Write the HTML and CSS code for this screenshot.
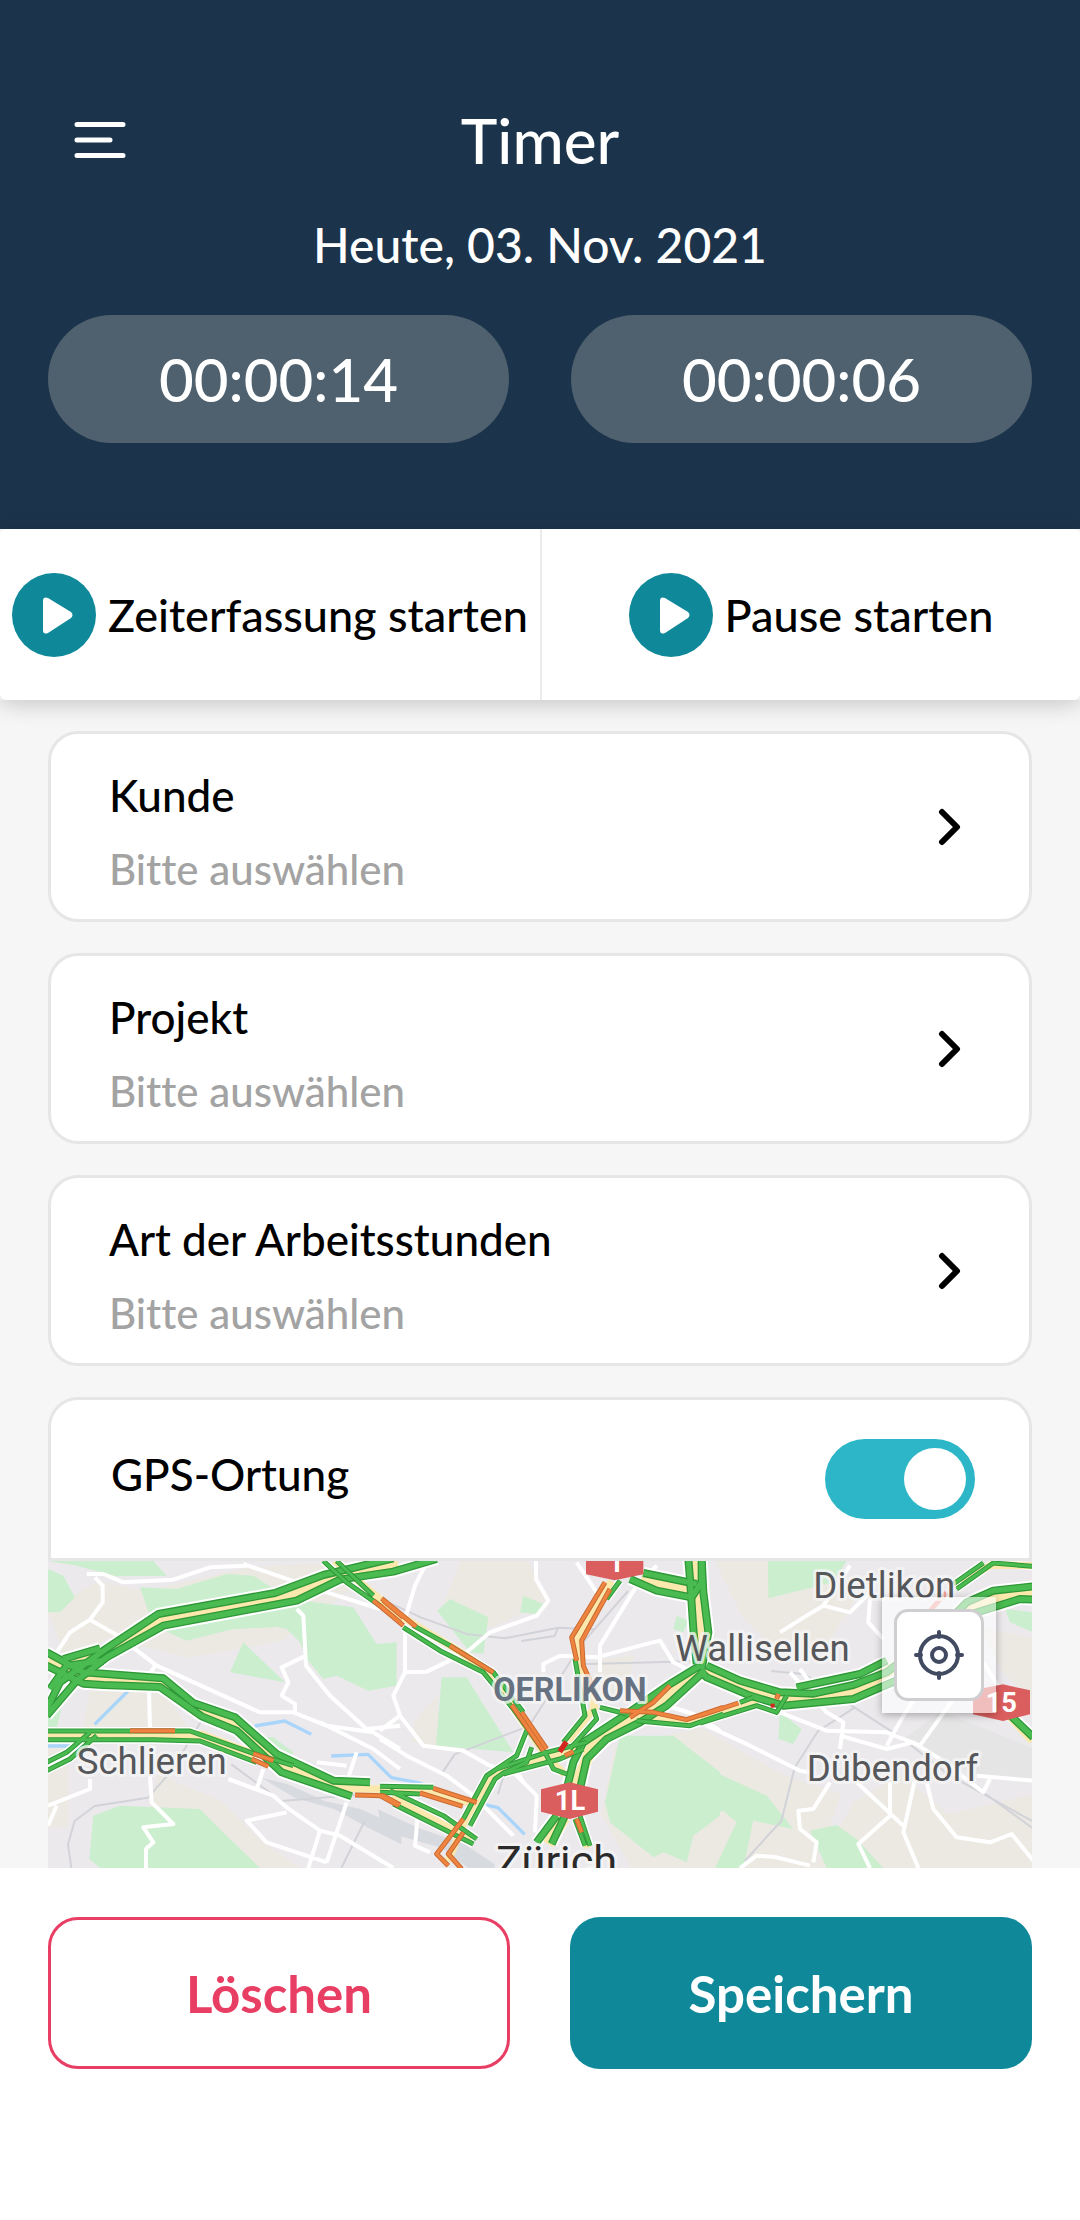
FILE: index.html
```html
<!DOCTYPE html>
<html lang="de">
<head>
<meta charset="utf-8">
<meta name="viewport" content="width=device-width, initial-scale=1">
<title>Timer</title>
<link rel="stylesheet" href="styles.css">
</head>
<body>
<header class="header">
  <div class="title-row">
    <button class="menu" type="button" aria-label="Menü">
      <svg width="52" height="38" viewBox="0 0 52 38" fill="none" stroke="currentColor" stroke-width="5" stroke-linecap="round"><path d="M3 3.500H49M3 19H36M3 34.500H49"/></svg>
    </button>
    <h1 class="title">Timer</h1>
  </div>
  <p class="date">Heute, 03. Nov. 2021</p>
  <div class="clocks">
    <div class="clock">00:00:14</div>
    <div class="clock">00:00:06</div>
  </div>
</header>

<div class="actions">
  <button class="action" type="button">
    <svg class="play" viewBox="0 0 84 84"><circle cx="42" cy="42" r="42"/><path d="M31 28v29q0 5 5 3l23-15q3-3 0-6L36 25q-5-2-5 3z"/></svg>
    <span>Zeiterfassung starten</span>
  </button>
  <button class="action" type="button">
    <svg class="play" viewBox="0 0 84 84"><circle cx="42" cy="42" r="42"/><path d="M31 28v29q0 5 5 3l23-15q3-3 0-6L36 25q-5-2-5 3z"/></svg>
    <span>Pause starten</span>
  </button>
</div>

<main class="content">
  <button class="card" type="button">
    <span class="card-text"><span class="label">Kunde</span><span class="value">Bitte auswählen</span></span>
    <svg class="chevron" viewBox="0 0 24 40"><path d="M4 5L19 20L4 35"/></svg>
  </button>
  <button class="card" type="button">
    <span class="card-text"><span class="label">Projekt</span><span class="value">Bitte auswählen</span></span>
    <svg class="chevron" viewBox="0 0 24 40"><path d="M4 5L19 20L4 35"/></svg>
  </button>
  <button class="card" type="button">
    <span class="card-text"><span class="label">Art der Arbeitsstunden</span><span class="value">Bitte auswählen</span></span>
    <svg class="chevron" viewBox="0 0 24 40"><path d="M4 5L19 20L4 35"/></svg>
  </button>

  <section class="gps">
    <div class="gps-head">
      <label class="label" for="gps">GPS-Ortung</label>
      <input class="switch" id="gps" type="checkbox" role="switch" checked>
    </div>
    <div class="map">
      <svg class="map-art" viewBox="0 0 2952 921" preserveAspectRatio="xMidYMin slice" fill="none" stroke-linejoin="round">
        <defs>
          <!-- wide carriageways -->
          <g id="free">
            <g transform="translate(-24 -36)">
              <path d="M20 480L60 400L190 305L355 195L705 132L850 78L1060 28M20 500L110 395L200 325L370 230L770 155L900 92L1060 68L1190 30"/>
              <path d="M20 310L130 370L190 374L370 388L460 462L585 505L710 615L880 695L990 700M20 350L130 404L190 408L360 414L485 502L590 545L725 670L935 742"/>
              <path d="M70 330L180 298M30 420L80 350L190 335"/>
            </g>
            <g transform="translate(996 -36)">
              <path d="M925 30L930 90L940 240L950 345M965 30L970 130L985 250L965 360"/>
              <path d="M750 90L830 125L935 145L965 100L965 40M790 72L950 105"/>
              <path d="M960 350L870 405L740 495L610 580L580 640L560 720M975 365L860 470L780 520L680 570L620 630L600 720"/>
              <path d="M530 800L470 880M555 800L515 885"/>
            </g>
            <g transform="translate(1956 -36)">
              <path d="M20 350L120 395L240 430L340 434L460 408L560 370L700 260L800 160L880 125L1000 112M0 365L20 385L150 440L250 470L460 450L600 390M800 200L960 150L1000 152"/>
              <path d="M290 415L480 375L560 335M890 460L1000 565"/>
            </g>
          </g>
          <!-- narrow carriageways -->
          <g id="free-thin">
            <g transform="translate(-24 -36)">
              <path d="M20 546H450L640 613L760 650M20 572H340L480 576L650 640M20 665L90 630L170 560M20 640L80 610L150 550"/>
              <path d="M850 36L920 100L1020 170M890 36L1000 140"/>
            </g>
            <g transform="translate(996 -36)">
              <path d="M70 235L180 305L310 370L400 480L500 620L520 660L560 675M100 230L210 290L340 370L430 490"/>
              <path d="M0 712L160 715M0 730L120 735M30 725L190 800L290 870M40 765L230 860L280 885"/>
              <path d="M440 545L410 620L350 660L320 680L250 810M455 595L440 640L370 672L345 690L270 830"/>
              <path d="M350 660L500 610L620 580M370 675L540 630L610 600"/>
              <path d="M720 95L680 150M585 330L615 500L550 580M640 480L650 510L570 600"/>
              <path d="M660 475L740 495M770 515L930 530L1030 495M600 800L630 890M585 810L615 890"/>
            </g>
            <g transform="translate(1956 -36)">
              <path d="M0 522L170 470L230 490L260 440M120 460L160 445M770 120L880 42L1000 52M760 105L850 42"/>
            </g>
          </g>
          <!-- slow traffic -->
          <g id="slow">
            <g transform="translate(-24 -36)"><path d="M270 545H405M635 630L685 652M640 614L700 635M945 738L1030 740L1080 768M1000 155L1080 220M1030 155L1090 205"/></g>
            <g transform="translate(996 -36)">
              <path d="M0 170L70 230M5 148L108 233M210 290L340 370M395 468L490 605M425 490L500 600"/>
              <path d="M675 100L575 265L590 335M690 120L605 275L610 350L650 440"/>
              <path d="M160 718L290 760M120 732L248 772M0 740L55 770M250 810L170 915L205 950M250 850L205 915L245 960"/>
              <path d="M870 410L820 460L750 505M720 485L820 490L920 512L1030 475M555 620L580 608M590 810L605 850"/>
            </g>
            <g transform="translate(1956 -36)"><path d="M0 500L115 462M230 450L235 435"/></g>
          </g>
        </defs>

        <rect width="2952" height="921" fill="#ece9ed"/>
        <!-- open land -->
        <g fill="#ece9e3">
          <path d="M0 150L150 60L290 90L600 20L900 0V90L700 240L420 290L180 230L60 320zM130 370L350 400L420 500L300 520H100zM330 640L520 720L640 840L760 921H560L300 760zM0 560L60 540V800H0z"/>
          <path d="M1240 0H1440L1500 120L1330 200L1180 140zM1100 480L1170 400V560L1090 540zM1640 300L1760 280L1730 420H1660zM1700 560L1960 500L2200 640L2380 700L2300 921H1750L1660 760z"/>
          <path d="M2000 0H2300L2420 120L2330 260L2180 270L2080 160zM2420 720L2560 640L2700 760L2952 700V921H2300zM2800 200L2952 230V420L2860 330z"/>
        </g>
        <path d="M2560 540L2680 450L2952 560V660L2780 640z" fill="#e5e5e5"/>
        <!-- parks and woods -->
        <g fill="#cbeecf">
          <g transform="translate(-24 -36)">
            <path d="M24 36H340L380 80L230 82L100 48zM24 60L70 80L105 145L60 190H24zM300 115L410 120L560 75L640 80L770 165L700 235L580 240L440 275L340 230zM610 280L735 400L570 370zM790 155L940 175L1010 285L1070 280V410L985 425L890 380L850 390L800 330L780 280L740 240L690 230zM24 450L75 430L50 540H24zM160 800L240 770L480 780L560 860L660 957H180L148 930zM650 565L700 565L760 610L740 640z"/>
          </g>
          <g transform="translate(996 -36)">
            <path d="M0 285H48V405L0 415zM172 185L210 150L325 205L310 315L270 310L230 260zM420 190L430 140L490 165L470 195zM185 385L260 385L300 450L400 610L168 590zM720 560H880L1020 670V800L940 860L920 940L850 910L820 925L690 820L675 760zM890 200L925 215L910 250L880 240z"/>
          </g>
          <g transform="translate(1956 -36)">
            <path d="M204 36H440L400 100L205 148zM-20 640L200 740L280 840L160 815L130 957H45L110 820L70 785L0 815zM330 845L410 828L470 870L550 957H380zM240 490L305 540L280 585L235 570zM915 180L1000 190V250L930 220z"/>
          </g>
        </g>
        <!-- rail yards -->
        <g fill="#d7dadf">
          <path d="M640 650L720 670L830 720L940 745L1060 800L1060 850L960 800L860 745L740 710z"/>
          <path d="M990 745L1110 800L1250 850L1340 910V921H1260L1180 860L1000 810z"/>
        </g>
        <g stroke="#d2d3d8" stroke-width="6">
          <path d="M70 921L60 850L80 780L140 735L300 710L370 630L460 480M550 610L700 720L950 700M950 780L880 921"/>
          <path d="M990 110L1120 170L1260 220L1370 232L1530 200L1640 205M1420 240L1520 225L1530 200M1180 640L1220 580L1430 500M1740 90L1600 250L1440 500M1590 310L1960 300M1350 700L1380 600"/>
          <path d="M2090 900L2200 780L2240 620L2310 510L2420 440L2560 530L2700 640L2952 780M2170 330L2270 340L2420 440M2800 690L2952 800"/>
        </g>
        <g stroke="#a9d5fb" stroke-width="10">
          <path d="M140 490L240 390M0 555H90M620 495L710 480L790 520M850 585L960 580L1030 650L1110 665L1240 715L1350 740L1430 820"/>
        </g>
        <!-- minor streets -->
        <g stroke="#fff" stroke-width="12">
          <g transform="translate(-24 -36)">
            <path d="M140 75H190L250 100L400 92L510 55L620 50M165 85L188 110V160L150 212L90 250L50 310M150 212L230 258L350 350L660 490L760 490L860 530L1000 550L1080 600M770 180L790 200L798 350L870 440L980 540L1080 530M798 320L725 355L745 400L725 440L765 465V490M345 350L326 380L330 540M24 770L150 720V690M24 830L50 770M330 680L335 760L400 825L310 835L340 880L318 900V957M565 690L700 740L740 775L840 845L900 860L1060 957M740 790L620 815L680 880L860 940M920 760L860 940M840 845L805 957M670 660L650 720M950 610L920 700M610 45L860 130L1020 180M840 520L1000 600L1080 660M830 640L920 650M340 590V620"/>
          </g>
          <g transform="translate(996 -36)">
            <path d="M140 40L105 110L75 210V370L40 440L60 500L0 545M75 370L140 368L260 310L330 250L470 200L505 155L468 90V36M60 500L130 590L250 605L330 650L400 670L470 740L465 850M0 570L80 620L200 680L280 740L400 860M115 780L105 890L150 910M590 40L650 130M660 370V290L770 110L830 50M490 370V345L540 320L650 325L780 290L840 275L880 340L940 370M800 450L940 495L1020 545M400 650L430 700"/>
          </g>
          <g transform="translate(1956 -36)">
            <path d="M240 250L320 200L370 170L450 190L500 140L520 110V80M510 150L505 220L550 270M270 370L380 490L430 520L420 600M240 490L380 545L560 550L660 590M0 520L150 590L300 665L330 670M560 590L610 500L650 440M660 590L710 520L760 450M420 560L560 600L640 580L720 630L850 730L870 690M830 680L1000 695M390 700L340 780L295 785L300 840L350 880L340 940M470 700L610 830M570 700V800L475 885L510 957M645 690L610 850L655 957M680 700L700 780L770 865L870 880L935 855L1000 935M120 957L170 920L230 925L330 950M850 340L900 420M370 170L450 50M330 400L300 360"/>
          </g>
        </g>
        <!-- motorways: casing, median, carriageways -->
        <use href="#free" stroke="#fff" stroke-width="36"/>
        <use href="#free-thin" stroke="#fff" stroke-width="24"/>
        <g stroke="#fbe8ad">
          <path stroke-width="40" d="M20 340L166 284L336 176L710 106L850 50L1050 6M0 300L110 354L166 356L340 364L450 448L570 490L700 610L860 675"/>
          <path stroke-width="34" d="M0 522H320L460 526L620 586M1940 0L1950 200L1960 310M1780 50L1930 90M1950 330L1800 440L1640 540L1580 680M1500 850L1550 770M1970 330L2180 410L2410 395L2540 320L2700 170L2850 110L2952 96"/>
          <path stroke-width="22" d="M860 0L1050 160L1240 275L1330 340L1490 580L1550 640M1690 60L1590 230L1600 310L1640 440L1560 540M1250 780L1330 640L1610 560M860 682L1000 684L1160 695L1280 730M1030 710L1270 835M1200 900L1250 780M1720 460L1920 485L2130 420M2740 60L2830 12L2952 14M1590 770L1620 860M2850 430L2952 540"/>
        </g>
        <use href="#free" stroke="#2f9838" stroke-width="24"/>
        <use href="#free" stroke="#4abb50" stroke-width="16"/>
        <use href="#free-thin" stroke="#2f9838" stroke-width="15"/>
        <use href="#free-thin" stroke="#4abb50" stroke-width="9"/>
        <use href="#slow" stroke="#c96a30" stroke-width="15"/>
        <use href="#slow" stroke="#ef8440" stroke-width="9"/>
        <path d="M1535 572L1555 542" stroke="#d3261f" stroke-width="16"/>
        <path d="M2168 434h12" stroke="#d3261f" stroke-width="12"/>
        <path d="M2645 150L2695 95" stroke="#ee9a92" stroke-width="14"/>

        <!-- motorway shields -->
        <g class="shield">
          <path d="M1614 -20H1786V40L1700 58L1614 40z"/><text x="1704" y="32">1</text>
          <path d="M1479 685L1565 664L1650 685V752L1565 774L1479 752z"/><text x="1566" y="748">1L</text>
          <path d="M2775 388L2865 370L2946 388V460L2865 480L2775 460z"/><text x="2860" y="453">15</text>
        </g>
        <g class="place">
          <text x="86" y="638">Schlieren</text>
          <text x="1882" y="300">Wallisellen</text>
          <text x="2296" y="111">Dietlikon</text>
          <text x="2276" y="661">Dübendorf</text>
          <text class="place-district" x="1336" y="420">OERLIKON</text>
          <text class="place-city" x="1344" y="944">Zürich</text>
        </g>
      </svg>
      <div class="locate-frame">
        <button class="locate" type="button" aria-label="Standort bestimmen">
          <svg width="50" height="50" viewBox="0 0 50 50" fill="none" stroke="currentColor" stroke-width="4" stroke-linecap="round"><circle cx="25" cy="25" r="19"/><circle cx="25" cy="25" r="7"/><path d="M25 2v5M25 43v5M2 25h5M43 25h5"/></svg>
        </button>
      </div>
    </div>
  </section>
</main>

<footer class="footer">
  <button class="btn btn-delete" type="button">Löschen</button>
  <button class="btn btn-save" type="button">Speichern</button>
</footer>
</body>
</html>
```
FILE: styles.css
```css
* {
  box-sizing: border-box;
}

body {
  margin: 0;
  min-height: 100vh;
  display: flex;
  flex-direction: column;
  background: #fff;
  color: #000;
  font-family: Lato, "Open Sans", sans-serif;
  font-weight: 500;
  font-variant-ligatures: none;
}

button {
  font: inherit;
  font-variant-ligatures: none;
  color: inherit;
  border: 0;
  padding: 0;
  background: none;
  cursor: pointer;
}

.header {
  padding: 104px 48px 86px;
  background: #1c344b;
  color: #fff;
}

.title-row {
  display: grid;
  grid-template-columns: 1fr auto 1fr;
  align-items: center;
  height: 72px;
}

.menu {
  justify-self: start;
  margin-left: 26px;
  display: flex;
}

.title {
  margin: 0;
  font-size: 62px;
  line-height: 70px;
  font-weight: 500;
}

.date {
  margin: 39px 0 40px;
  font-size: 48px;
  line-height: 60px;
  text-align: center;
}

.clocks {
  display: grid;
  grid-template-columns: 1fr 1fr;
  gap: 62px;
}

.clock {
  border-radius: 64px;
  background: #4f616e;
  font-size: 60px;
  line-height: 128px;
  text-align: center;
}

.actions {
  display: grid;
  grid-template-columns: 1fr 1fr;
  position: relative;
  border-radius: 6px;
  background: #fff;
  box-shadow: 0 4px 22px rgba(0, 0, 0, 0.2);
}

.action {
  display: flex;
  align-items: center;
  justify-content: center;
  gap: 12px;
  height: 171px;
  font-size: 45px;
  white-space: nowrap;
}

.action + .action {
  border-left: 2px solid #ececec;
}

.play {
  width: 84px;
  height: 84px;
  flex: none;
  fill: #fff;
}

.play circle {
  fill: #0f889a;
}

.content {
  display: flex;
  flex-direction: column;
  gap: 31px;
  padding: 31px 48px 0;
  background: #f6f6f6;
}

.card {
  display: flex;
  align-items: center;
  justify-content: space-between;
  padding: 0 67px 0 58px;
  border: 3px solid #e6e6e6;
  border-radius: 30px;
  background: #fff;
  text-align: left;
}

.card-text {
  display: flex;
  flex-direction: column;
  padding: 24px 0 13px;
}

.label {
  font-size: 44px;
  line-height: 74px;
}

.value {
  font-size: 42px;
  line-height: 74px;
  color: #a3a3a3;
}

.chevron {
  width: 24px;
  height: 40px;
  fill: none;
  stroke: #000;
  stroke-width: 6;
  stroke-linecap: round;
  stroke-linejoin: round;
}

.gps-head {
  display: flex;
  align-items: center;
  justify-content: space-between;
  height: 164px;
  padding: 0 54px 0 60px;
  border: 3px solid #e6e6e6;
  border-radius: 30px 30px 0 0;
  background: #fff;
}

.gps-head .label {
  padding-bottom: 10px;
}

.switch {
  appearance: none;
  display: flex;
  align-items: center;
  width: 150px;
  height: 80px;
  margin: 0;
  padding: 0 9px;
  border-radius: 40px;
  background: #b8b8b8;
  cursor: pointer;
}

.switch::before {
  content: "";
  width: 62px;
  height: 62px;
  border-radius: 50%;
  background: #fff;
}

.switch:checked {
  justify-content: flex-end;
  background: #2cb6c8;
}

.map {
  position: relative;
  aspect-ratio: 984 / 307;
  overflow: hidden;
}

.map-art {
  display: block;
  width: 100%;
  height: 100%;
}

.shield path {
  fill: #db5e5e;
}

.shield text {
  fill: #fff;
  font: 700 82px Roboto, sans-serif;
  text-anchor: middle;
}

.place text {
  fill: #55575b;
  stroke: rgba(245, 245, 245, 0.8);
  stroke-width: 18px;
  paint-order: stroke;
  font: 400 110px Roboto, sans-serif;
}

.place .place-district {
  fill: #667282;
  font-size: 97px;
  font-weight: 700;
}

.place .place-city {
  fill: #2a2a2a;
  font-size: 130px;
}

.locate-frame {
  position: absolute;
  top: 36px;
  right: 36px;
  padding: 12px;
  background: rgba(255, 255, 255, 0.6);
  box-shadow: 0 2px 8px rgba(0, 0, 0, 0.3);
}

.locate {
  display: flex;
  align-items: center;
  justify-content: center;
  width: 90px;
  height: 92px;
  border: 3px solid #cfcfd1;
  border-radius: 14px;
  background: #fff;
  color: #414a60;
}

.footer {
  flex: 1;
  display: grid;
  grid-template-columns: 1fr 1fr;
  align-items: start;
  gap: 60px;
  padding: 49px 48px;
}

.btn {
  height: 152px;
  border-radius: 30px;
  font-size: 51px;
  font-weight: 700;
}

.btn-delete {
  border: 3px solid #e83e64;
  color: #e83e64;
}

.btn-save {
  background: #0f889a;
  color: #fff;
}
```
